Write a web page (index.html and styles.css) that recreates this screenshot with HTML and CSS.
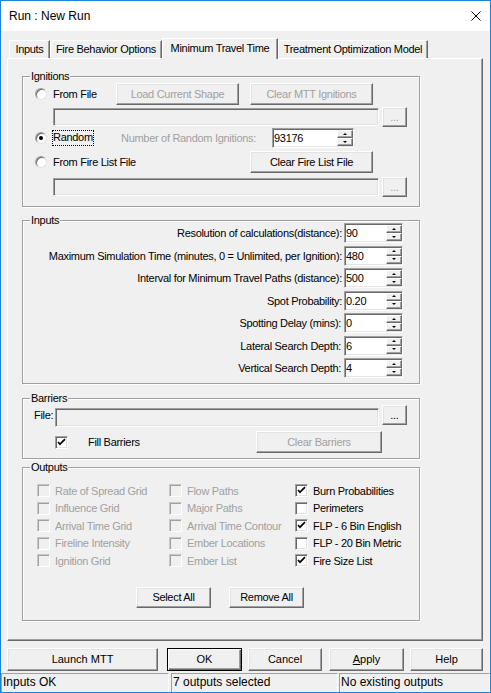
FILE: index.html
```html
<!DOCTYPE html>
<html>
<head>
<meta charset="utf-8">
<link rel="stylesheet" href="styles.css">
</head>
<body>
<div class="window">
  <div class="titlebar">
    <span class="title">Run : New Run</span>
    <svg class="close" width="10" height="10" viewBox="0 0 10 10"><path d="M0.5 0.5L9.5 9.5M9.5 0.5L0.5 9.5" stroke="#000" stroke-width="1"/></svg>
  </div>
  <div class="client">
    <div class="tabstrip">
      <div class="tab t1">Inputs</div>
      <div class="tab t2">Fire Behavior Options</div>
      <div class="tab active t3">Minimum Travel Time</div>
      <div class="tab t4">Treatment Optimization Model</div>
    </div>
    <div class="panel">
      <div class="group g-ign">
        <div class="legend">Ignitions</div>
        <div class="row h22">
          <div class="opt w81"><span class="radio"></span><span class="otext">From File</span></div>
          <div class="btn dis w123">Load Current Shape</div>
          <div class="btn dis w123 ml11">Clear MTT Ignitions</div>
        </div>
        <div class="row h20 mt2">
          <div class="textbox tb-ign"></div>
          <div class="btn dis ell">...</div>
        </div>
        <div class="row h20 mt1">
          <div class="opt w81"><span class="radio on"></span><span class="otext focus">Random</span></div>
          <div class="numlabel dis-text">Number of Random Ignitions:</div>
          <div class="spin w82"><span class="val">93176</span><span class="arrows"><span class="ab up"></span><span class="ab down"></span></span></div>
        </div>
        <div class="row h22 mt3">
          <div class="opt w215"><span class="radio"></span><span class="otext">From Fire List File</span></div>
          <div class="btn w123">Clear Fire List File</div>
        </div>
        <div class="row h20 mt4">
          <div class="textbox tb-ign"></div>
          <div class="btn dis ell">...</div>
        </div>
      </div>

      <div class="group g-inp">
        <div class="legend">Inputs</div>
        <div class="fields">
          <div class="frow"><span class="flabel">Resolution of calculations(distance):</span><div class="spin w59"><span class="val">90</span><span class="arrows"><span class="ab up"></span><span class="ab down"></span></span></div></div>
          <div class="frow"><span class="flabel">Maximum Simulation Time (minutes, 0 = Unlimited, per Ignition):</span><div class="spin w59"><span class="val">480</span><span class="arrows"><span class="ab up"></span><span class="ab down"></span></span></div></div>
          <div class="frow"><span class="flabel">Interval for Minimum Travel Paths (distance):</span><div class="spin w59"><span class="val">500</span><span class="arrows"><span class="ab up"></span><span class="ab down"></span></span></div></div>
          <div class="frow"><span class="flabel">Spot Probability:</span><div class="spin w59"><span class="val">0.20</span><span class="arrows"><span class="ab up"></span><span class="ab down"></span></span></div></div>
          <div class="frow"><span class="flabel sp">Spotting Delay (mins):</span><div class="spin w59"><span class="val">0</span><span class="arrows"><span class="ab up"></span><span class="ab down"></span></span></div></div>
          <div class="frow"><span class="flabel sp">Lateral Search Depth:</span><div class="spin w59"><span class="val">6</span><span class="arrows"><span class="ab up"></span><span class="ab down"></span></span></div></div>
          <div class="frow"><span class="flabel sp">Vertical Search Depth:</span><div class="spin w59"><span class="val">4</span><span class="arrows"><span class="ab up"></span><span class="ab down"></span></span></div></div>
        </div>
      </div>

      <div class="group g-bar">
        <div class="legend">Barriers</div>
        <div class="row h22 top">
          <span class="filelabel">File:</span>
          <div class="textbox tb-bar"></div>
          <div class="btn ell">...</div>
        </div>
        <div class="row h22 mt4">
          <div class="fill"><span class="chk on"><svg width="9" height="9" viewBox="0 0 9 9"><path d="M1 4 L3 6.2 L8 1.2" fill="none" stroke="#000" stroke-width="1.7"/></svg></span><span class="fill-text">Fill Barriers</span></div>
          <div class="btn dis w126">Clear Barriers</div>
        </div>
      </div>

      <div class="group g-out">
        <div class="legend">Outputs</div>
        <div class="outgrid">
          <div class="citem"><span class="chk off"></span><span class="clbl dis-text">Rate of Spread Grid</span></div>
          <div class="citem"><span class="chk off"></span><span class="clbl dis-text">Flow Paths</span></div>
          <div class="citem"><span class="chk on"><svg width="9" height="9" viewBox="0 0 9 9"><path d="M1 4 L3 6.2 L8 1.2" fill="none" stroke="#000" stroke-width="1.7"/></svg></span><span class="clbl">Burn Probabilities</span></div>

          <div class="citem"><span class="chk off"></span><span class="clbl dis-text">Influence Grid</span></div>
          <div class="citem"><span class="chk off"></span><span class="clbl dis-text">Major Paths</span></div>
          <div class="citem"><span class="chk on"></span><span class="clbl">Perimeters</span></div>

          <div class="citem"><span class="chk off"></span><span class="clbl dis-text">Arrival Time Grid</span></div>
          <div class="citem"><span class="chk off"></span><span class="clbl dis-text">Arrival Time Contour</span></div>
          <div class="citem"><span class="chk on"><svg width="9" height="9" viewBox="0 0 9 9"><path d="M1 4 L3 6.2 L8 1.2" fill="none" stroke="#000" stroke-width="1.7"/></svg></span><span class="clbl">FLP - 6 Bin English</span></div>

          <div class="citem"><span class="chk off"></span><span class="clbl dis-text">Fireline Intensity</span></div>
          <div class="citem"><span class="chk off"></span><span class="clbl dis-text">Ember Locations</span></div>
          <div class="citem"><span class="chk on"></span><span class="clbl">FLP - 20 Bin Metric</span></div>

          <div class="citem"><span class="chk off"></span><span class="clbl dis-text">Ignition Grid</span></div>
          <div class="citem"><span class="chk off"></span><span class="clbl dis-text">Ember List</span></div>
          <div class="citem"><span class="chk on"><svg width="9" height="9" viewBox="0 0 9 9"><path d="M1 4 L3 6.2 L8 1.2" fill="none" stroke="#000" stroke-width="1.7"/></svg></span><span class="clbl">Fire Size List</span></div>
        </div>
        <div class="row h21 selrow">
          <div class="btn w75 ml113">Select All</div>
          <div class="btn w75 ml18">Remove All</div>
        </div>
      </div>
    </div>

    <div class="actions">
      <div class="btn abtn w151">Launch MTT</div>
      <div class="btn abtn def w75 ml9">OK</div>
      <div class="btn abtn w74 ml6">Cancel</div>
      <div class="btn abtn w75 ml7"><span><u>A</u>pply</span></div>
      <div class="btn abtn w73 ml6">Help</div>
    </div>

    <div class="status">
      <div class="pane p1">Inputs OK</div>
      <div class="pane p2">7 outputs selected</div>
      <div class="pane p3">No existing outputs</div>
    </div>
  </div>
</div>
</body>
</html>
```

FILE: styles.css
```css
* { box-sizing: border-box; }

body {
  margin: 0;
  font-family: "Liberation Sans", Arial, sans-serif;
  font-size: 11px;
  color: #000;
  background: #f0f0f0;
}

.window {
  width: 491px;
  height: 693px;
  border: 1px solid #1883d7;
  background: #f0f0f0;
  display: flex;
  flex-direction: column;
  overflow: hidden;
}

.titlebar {
  height: 30px;
  flex: none;
  background: #fff;
  display: flex;
  align-items: center;
  justify-content: space-between;
  padding: 0 9px 0 8px;
  font-size: 12px;
}
.close { display: block; }

.client {
  flex: 1;
  display: flex;
  flex-direction: column;
  padding-top: 7px;
}

/* tabs */
.tabstrip {
  display: flex;
  align-items: flex-end;
  height: 20px;
  margin-left: 8px;
  flex: none;
  letter-spacing: -0.3px;
}
.tab {
  height: 18px;
  display: flex;
  align-items: center;
  justify-content: center;
  border-top: 1px solid #fff;
  border-left: 1px solid #fff;
  border-right: 1px solid #696969;
  box-shadow: inset -1px 0 #a0a0a0;
  background: #f0f0f0;
  white-space: nowrap;
  padding-bottom: 1px;
}
.t1 { width: 41px; }
.t2 { width: 112px; }
.t3 { width: 116px; }
.t4 { width: 150px; }
.tab.active {
  height: 21px;
  margin-bottom: -1px;
  position: relative;
  z-index: 1;
  padding-bottom: 3px;
}

.panel {
  flex: none;
  width: 476px;
  height: 583px;
  margin-left: 6px;
  border: 1px solid;
  border-color: #fff #696969 #696969 #fff;
  box-shadow: inset -1px -1px #a0a0a0;
  display: flex;
  flex-direction: column;
  padding-left: 14px;
  letter-spacing: -0.3px;
}

/* group boxes */
.group {
  flex: none;
  width: 398px;
  border: 1px solid #a0a0a0;
  box-shadow: inset 1px 1px #fff, 1px 1px #fff;
  display: flex;
  flex-direction: column;
}
.legend {
  align-self: flex-start;
  margin: -7px 0 -6px 7px;
  padding: 0 1px;
  height: 13px;
  line-height: 13px;
  background: #f0f0f0;
}
.g-ign { margin-top: 17px; height: 131px; }
.g-ign .legend { margin-bottom: 0; }
.g-inp { margin-top: 13px; height: 164px; }
.g-inp .legend { margin-bottom: -4px; }
.g-bar { margin-top: 14px; height: 61px; }
.g-bar .legend { margin-bottom: 0; }
.g-out { margin-top: 8px; height: 154px; }
.g-out .legend { margin-bottom: 8px; }

.row { display: flex; align-items: center; flex: none; }
.row.top { align-items: flex-start; }
.h20 { height: 20px; }
.h21 { height: 21px; }
.h22 { height: 22px; }
.mt1 { margin-top: 1px; }
.mt2 { margin-top: 2px; }
.mt3 { margin-top: 3px; }
.mt4 { margin-top: 4px; }

.ml6 { margin-left: 6px; }
.ml7 { margin-left: 7px; }
.ml9 { margin-left: 9px; }
.ml11 { margin-left: 11px; }
.ml18 { margin-left: 18px; }
.ml113 { margin-left: 113px; }

.w59 { width: 59px; }
.w73 { width: 73px; }
.w74 { width: 74px; }
.w75 { width: 75px; }
.w81 { width: 81px; }
.w82 { width: 82px; }
.w123 { width: 123px; }
.w126 { width: 126px; }
.w151 { width: 151px; }
.w215 { width: 215px; }

/* radio options */
.opt {
  display: flex;
  align-items: center;
  margin-left: 12px;
  flex: none;
  white-space: nowrap;
}
.radio {
  width: 12px;
  height: 12px;
  flex: none;
  border-radius: 50%;
  background: #fff;
  border: 1px solid;
  border-color: #a0a0a0 #e3e3e3 #e3e3e3 #a0a0a0;
  box-shadow: inset 1px 1px #696969;
  display: flex;
  align-items: center;
  justify-content: center;
}
.radio.on::after {
  content: "";
  width: 4px;
  height: 4px;
  border-radius: 50%;
  background: #000;
}
.otext { margin-left: 6px; line-height: 13px; }
.otext.focus {
  margin-left: 5px;
  border: 1px dotted #000;
  padding: 0 0 1px 0;
  line-height: 13px;
  width: 42px;
}

/* buttons */
.btn {
  flex: none;
  display: flex;
  align-items: center;
  justify-content: center;
  height: 22px;
  background: #f0f0f0;
  border: 1px solid;
  border-color: #fff #696969 #696969 #fff;
  box-shadow: inset -1px -1px #a0a0a0, inset 1px 1px #e3e3e3;
  white-space: nowrap;
  padding-bottom: 1px;
}
.btn.dis { color: #a0a0a0; }
.h21 .btn { height: 21px; }
.ell { width: 25px; height: 20px; margin-left: 3px; }

.dis-text { color: #a0a0a0; }

/* text boxes */
.textbox {
  flex: none;
  height: 18px;
  background: #f0f0f0;
  border: 1px solid;
  border-color: #a0a0a0 #fff #fff #a0a0a0;
  box-shadow: inset 1px 1px #696969, inset -1px -1px #e3e3e3;
}
.tb-ign { width: 326px; margin-left: 30px; }
.tb-bar { width: 324px; height: 19px; margin-top: 3px; }

.numlabel { margin-left: 5px; width: 151px; flex: none; white-space: nowrap; }

/* spin controls */
.spin {
  flex: none;
  height: 20px;
  display: flex;
  align-items: center;
  background: #fff;
  border: 1px solid;
  border-color: #a0a0a0 #fff #fff #a0a0a0;
  box-shadow: inset 1px 1px #696969, inset -1px -1px #e3e3e3;
  padding: 1px 0 1px 1px;
}
.spin .val { flex: 1; padding-left: 0; color: #000; }
.arrows {
  display: flex;
  flex-direction: column;
  width: 16px;
  height: 16px;
  flex: none;
  margin-right: 0;
}
.ab {
  flex: 1;
  background: #f0f0f0;
  border: 1px solid;
  border-color: #fff #696969 #696969 #fff;
  box-shadow: inset -1px -1px #a0a0a0;
  display: flex;
  align-items: center;
  justify-content: center;
}
.ab.up::after {
  content: "";
  border-left: 2px solid transparent;
  border-right: 2px solid transparent;
  border-bottom: 2px solid #000;
  margin-top: -1px;
}
.ab.down::after {
  content: "";
  border-left: 2px solid transparent;
  border-right: 2px solid transparent;
  border-top: 2px solid #000;
  margin-top: -1px;
}

/* inputs group */
.fields {
  display: flex;
  flex-direction: column;
  gap: 2.5px;
  padding-right: 16px;
}
.frow {
  display: flex;
  align-items: center;
  justify-content: flex-end;
  height: 20px;
}
.flabel { margin-right: 2px; white-space: nowrap; }
.flabel.sp { margin-right: 3px; }

/* barriers */
.filelabel {
  margin-left: 11px;
  width: 21px;
  margin-top: 4px;
  line-height: 13px;
  flex: none;
}
.fill {
  display: flex;
  align-items: center;
  width: 201px;
  margin-left: 32px;
  flex: none;
}
.fill-text { margin-left: 20px; }

/* checkboxes */
.chk {
  width: 13px;
  height: 13px;
  flex: none;
  border: 1px solid;
  border-color: #a0a0a0 #fff #fff #a0a0a0;
  box-shadow: inset 1px 1px #696969, inset -1px -1px #e3e3e3;
  display: flex;
  align-items: center;
  justify-content: center;
}
.chk.on { background: #fff; }
.chk.off {
  background: #f0f0f0;
  border-color: #c8c8c8 #fff #fff #c8c8c8;
  box-shadow: inset 1px 1px #a0a0a0;
}
.chk svg { display: block; }

.outgrid {
  display: grid;
  grid-template-columns: 132px 126px auto;
  grid-auto-rows: 17.5px;
  margin-left: 14px;
}
.citem { display: flex; align-items: center; white-space: nowrap; }
.clbl { margin-left: 5px; }
.selrow { margin-top: 17.5px; }

/* dialog buttons */
.actions {
  display: flex;
  height: 23px;
  margin-top: 7px;
  margin-left: 6px;
  flex: none;
}
.abtn { height: 23px; }
.abtn.def {
  border: 1px solid #000;
  box-shadow: inset 1px 1px #fff, inset -1px -1px #696969, inset -2px -2px #a0a0a0;
}

/* status bar */
.status {
  display: flex;
  height: 19px;
  margin-top: 2px;
  font-size: 12px;
  flex: none;
}
.pane {
  height: 19px;
  border-top: 1px solid #a0a0a0;
  border-left: 1px solid #a0a0a0;
  border-right: 1px solid #fff;
  padding-left: 1px;
  line-height: 17px;
  white-space: nowrap;
  flex: none;
}
.p1 { width: 168px; }
.p2 { width: 167px; margin-left: 2px; }
.p3 { flex: 1; margin-left: 1px; }
```
